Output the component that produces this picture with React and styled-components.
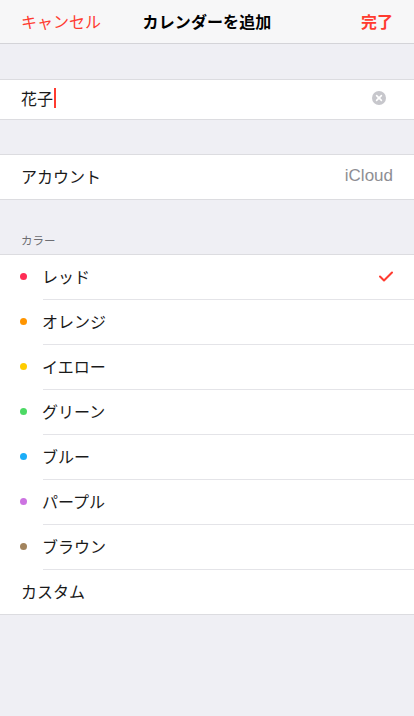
import React from "react";
import styled, { createGlobalStyle } from "styled-components";

const GlobalStyle = createGlobalStyle`
  html, body {
    margin: 0;
    padding: 0;
    background: #efeff4;
    font-family: "Noto Sans CJK JP", "Liberation Sans", sans-serif;
    -webkit-font-smoothing: antialiased;
  }
`;

const Screen = styled.div`
  width: 414px;
  min-height: 716px;
  background: #efeff4;
  display: flex;
  flex-direction: column;
`;

const NavBar = styled.div`
  height: 44px;
  box-sizing: border-box;
  background: #f7f7f8;
  border-bottom: 1px solid #d4d4d8;
  display: grid;
  grid-template-columns: 1fr auto 1fr;
  align-items: center;
  padding: 0 21px 2px 21px;
`;

const NavButton = styled.span`
  color: #ff3b30;
  font-size: 16px;
  font-weight: ${p => (p.bold ? 700 : 400)};
  justify-self: ${p => (p.right ? "end" : "start")};
  line-height: 1;
`;

const NavTitle = styled.span`
  color: #000;
  font-size: 16px;
  font-weight: 700;
  line-height: 1;
  letter-spacing: 0.1px;
`;

const Spacer = styled.div`
  height: ${p => p.h}px;
`;

const Group = styled.div`
  background: #fff;
  border-top: 1px solid #dcdce0;
  border-bottom: 1px solid #dcdce0;
`;

const Row = styled.div`
  height: ${p => p.h || 45}px;
  box-sizing: border-box;
  display: flex;
  align-items: center;
  padding: 0 21px 3px;
  position: relative;
  &::after {
    content: ${p => (p.separator ? '""' : "none")};
    position: absolute;
    left: 43px;
    right: 0;
    bottom: 0;
    height: 1px;
    background: #e4e4e8;
  }
`;

const Label = styled.span`
  flex: 1;
  font-size: 16px;
  line-height: 1;
  color: #1a1a1a;
  display: flex;
  align-items: center;
`;

const Detail = styled.span`
  font-family: "Liberation Sans", "Noto Sans CJK JP", sans-serif;
  font-size: 17px;
  line-height: 1;
  color: #8e8e93;
`;

const Caret = styled.span`
  display: inline-block;
  width: 2px;
  height: 20px;
  margin-left: 1px;
  background: #ff3b30;
`;

const SectionHeader = styled.div`
  height: 54px;
  box-sizing: border-box;
  padding: 0 21px 8px;
  display: flex;
  align-items: flex-end;
  font-size: 11.5px;
  line-height: 1;
  color: #6d6d72;
`;

const Dot = styled.span`
  width: 7px;
  height: 7px;
  border-radius: 50%;
  background: ${p => p.color};
  margin: 0 15px 0 -1px;
  flex-shrink: 0;
`;

const ClearButton = styled.span`
  display: flex;
  margin-right: 7px;
`;

const ClearIcon = () => (
  <svg width="14" height="14" viewBox="0 0 14 14">
    <circle cx="7" cy="7" r="7" fill="#c7c7cc" />
    <path d="M4.6 4.6 L9.4 9.4 M9.4 4.6 L4.6 9.4" stroke="#fff" strokeWidth="1.6" strokeLinecap="round" />
  </svg>
);

const Check = () => (
  <svg width="14" height="11" viewBox="0 0 14 11">
    <path d="M1 5.5 L5 9.5 L13 1.5" fill="none" stroke="#ff3b30" strokeWidth="2" strokeLinecap="round" strokeLinejoin="round" />
  </svg>
);

const colors = [
  { name: "レッド", color: "#ff2d55", checked: true },
  { name: "オレンジ", color: "#ff9500" },
  { name: "イエロー", color: "#ffcc00" },
  { name: "グリーン", color: "#4cd964" },
  { name: "ブルー", color: "#1badf8" },
  { name: "パープル", color: "#cc73e1" },
  { name: "ブラウン", color: "#a2845e" }
];

export default function App() {
  return (
    <Screen>
      <GlobalStyle />
      <NavBar>
        <NavButton>キャンセル</NavButton>
        <NavTitle>カレンダーを追加</NavTitle>
        <NavButton right bold>完了</NavButton>
      </NavBar>
      <Spacer h={35} />
      <Group>
        <Row h={39}>
          <Label>
            花子
            <Caret />
          </Label>
          <ClearButton>
            <ClearIcon />
          </ClearButton>
        </Row>
      </Group>
      <Spacer h={34} />
      <Group>
        <Row h={44}>
          <Label>アカウント</Label>
          <Detail>iCloud</Detail>
        </Row>
      </Group>
      <SectionHeader>カラー</SectionHeader>
      <Group>
        {colors.map(c => (
          <Row key={c.name} separator>
            <Dot color={c.color} />
            <Label>{c.name}</Label>
            {c.checked && <Check />}
          </Row>
        ))}
        <Row h={44}>
          <Label>カスタム</Label>
        </Row>
      </Group>
    </Screen>
  );
}
